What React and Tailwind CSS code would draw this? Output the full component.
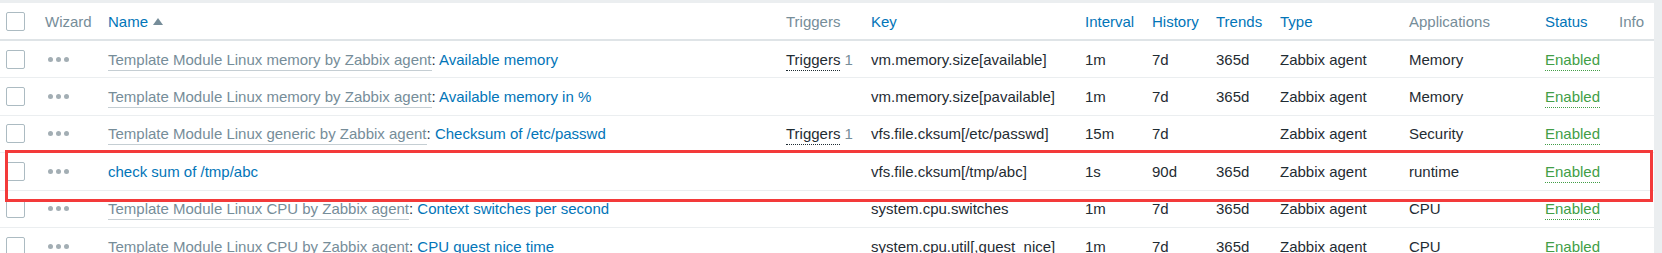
import React from 'react';

// column grid shared by header + rows
const COLS = 'grid grid-cols-[45px_63px_678px_85px_214px_67px_64px_64px_129px_136px_74px_35px] items-center';

const rows = [
  { tpl: 'Template Module Linux memory by Zabbix agent', name: 'Available memory', triggers: 1, key: 'vm.memory.size[available]', interval: '1m', history: '7d', trends: '365d', type: 'Zabbix agent', app: 'Memory' },
  { tpl: 'Template Module Linux memory by Zabbix agent', name: 'Available memory in %', key: 'vm.memory.size[pavailable]', interval: '1m', history: '7d', trends: '365d', type: 'Zabbix agent', app: 'Memory' },
  { tpl: 'Template Module Linux generic by Zabbix agent', name: 'Checksum of /etc/passwd', triggers: 1, key: 'vfs.file.cksum[/etc/passwd]', interval: '15m', history: '7d', trends: '', type: 'Zabbix agent', app: 'Security' },
  { name: 'check sum of /tmp/abc', key: 'vfs.file.cksum[/tmp/abc]', interval: '1s', history: '90d', trends: '365d', type: 'Zabbix agent', app: 'runtime' },
  { tpl: 'Template Module Linux CPU by Zabbix agent', name: 'Context switches per second', key: 'system.cpu.switches', interval: '1m', history: '7d', trends: '365d', type: 'Zabbix agent', app: 'CPU' },
  { tpl: 'Template Module Linux CPU by Zabbix agent', name: 'CPU guest nice time', key: 'system.cpu.util[,guest_nice]', interval: '1m', history: '7d', trends: '365d', type: 'Zabbix agent', app: 'CPU' },
];

function Checkbox() {
  return <div className="ml-[6px] w-[19px] h-[19px] rounded-[2px] border border-[#acbbc2] bg-white" />;
}

function Dots() {
  return (
    <div className="flex gap-[3px] ml-[3px]">
      <span className="w-[5px] h-[5px] rounded-full bg-[#a3aeb4]" />
      <span className="w-[5px] h-[5px] rounded-full bg-[#a3aeb4]" />
      <span className="w-[5px] h-[5px] rounded-full bg-[#a3aeb4]" />
    </div>
  );
}

export default function App() {
  return (
    <div className="w-[1662px] h-[253px] overflow-hidden bg-[#ebeef0] pt-[3px] text-[15px] text-[#1f2c33] font-['Liberation_Sans',Arial,sans-serif] leading-none">
      <div className="relative w-[1654px] bg-white">
        {/* header */}
        <div className={`${COLS} h-[38px] border-b-2 border-[#dfe4e7] whitespace-nowrap`}>
          <div><Checkbox /></div>
          <div className="text-[#768d99]">Wizard</div>
          <div className="text-[#0275b8] flex items-center gap-[5px]">
            Name
            <span className="w-0 h-0 border-l-[5px] border-r-[5px] border-b-[7px] border-l-transparent border-r-transparent border-b-[#768d99]" />
          </div>
          <div className="text-[#768d99]">Triggers</div>
          <div className="text-[#0275b8]">Key</div>
          <div className="text-[#0275b8]">Interval</div>
          <div className="text-[#0275b8]">History</div>
          <div className="text-[#0275b8]">Trends</div>
          <div className="text-[#0275b8]">Type</div>
          <div className="text-[#768d99]">Applications</div>
          <div className="text-[#0275b8]">Status</div>
          <div className="text-[#768d99]">Info</div>
        </div>

        {/* rows */}
        {rows.map((r, i) => (
          <div key={i} className={`${COLS} h-[37.4px] border-b border-[#ebeef0] whitespace-nowrap`}>
            <div><Checkbox /></div>
            <div><Dots /></div>
            <div>
              {r.tpl && (
                <>
                  <span className="text-[#768d99] border-b border-[#c5ced3] pb-[2px]">{r.tpl}</span>
                  <span>: </span>
                </>
              )}
              <span className="text-[#0275b8]">{r.name}</span>
            </div>
            <div>
              {r.triggers && (
                <>
                  <span className="border-b border-dotted border-[#1f2c33] pb-[2px]">Triggers</span>
                  <span className="text-[#768d99] ml-[4px]">{r.triggers}</span>
                </>
              )}
            </div>
            <div>{r.key}</div>
            <div>{r.interval}</div>
            <div>{r.history}</div>
            <div>{r.trends}</div>
            <div>{r.type}</div>
            <div>{r.app}</div>
            <div>
              <span className="text-[#429e47] border-b border-dotted border-[#429e47] pb-[2px]">Enabled</span>
            </div>
            <div />
          </div>
        ))}

        {/* red annotation frame */}
        <div className="absolute left-[5px] top-[147px] w-[1648px] h-[52px] border-[3px] border-[#f33a3a] pointer-events-none" />
      </div>
    </div>
  );
}
